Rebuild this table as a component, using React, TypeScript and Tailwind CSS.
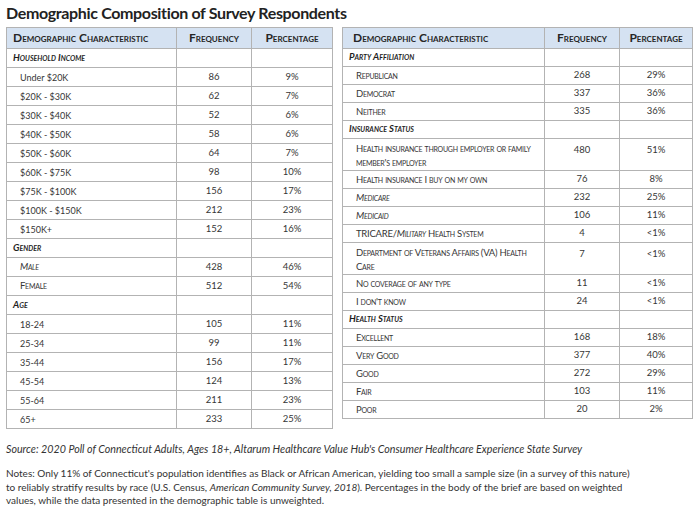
import React from "react";

type Row =
  | { kind: "cat"; label: React.ReactNode }
  | { kind: "item"; label: React.ReactNode; freq: string; pct: string; sc?: boolean; tall?: boolean };

const leftRows: Row[] = [
  { kind: "cat", label: "Household Income" },
  { kind: "item", label: "Under $20K", freq: "86", pct: "9%" },
  { kind: "item", label: "$20K - $30K", freq: "62", pct: "7%" },
  { kind: "item", label: "$30K - $40K", freq: "52", pct: "6%" },
  { kind: "item", label: "$40K - $50K", freq: "58", pct: "6%" },
  { kind: "item", label: "$50K - $60K", freq: "64", pct: "7%" },
  { kind: "item", label: "$60K - $75K", freq: "98", pct: "10%" },
  { kind: "item", label: "$75K - $100K", freq: "156", pct: "17%" },
  { kind: "item", label: "$100K - $150K", freq: "212", pct: "23%" },
  { kind: "item", label: "$150K+", freq: "152", pct: "16%" },
  { kind: "cat", label: "Gender" },
  { kind: "item", label: <i>Male</i>, freq: "428", pct: "46%", sc: true },
  { kind: "item", label: "Female", freq: "512", pct: "54%", sc: true },
  { kind: "cat", label: "Age" },
  { kind: "item", label: "18-24", freq: "105", pct: "11%" },
  { kind: "item", label: "25-34", freq: "99", pct: "11%" },
  { kind: "item", label: "35-44", freq: "156", pct: "17%" },
  { kind: "item", label: "45-54", freq: "124", pct: "13%" },
  { kind: "item", label: "55-64", freq: "211", pct: "23%" },
  { kind: "item", label: "65+", freq: "233", pct: "25%" },
];

const rightRows: Row[] = [
  { kind: "cat", label: "Party Affiliation" },
  { kind: "item", label: "Republican", freq: "268", pct: "29%", sc: true },
  { kind: "item", label: "Democrat", freq: "337", pct: "36%", sc: true },
  { kind: "item", label: "Neither", freq: "335", pct: "36%", sc: true },
  { kind: "cat", label: "Insurance Status" },
  {
    kind: "item",
    label: "Health insurance through employer or family member's employer",
    freq: "480",
    pct: "51%",
    sc: true,
    tall: true,
  },
  { kind: "item", label: "Health insurance I buy on my own", freq: "76", pct: "8%", sc: true },
  { kind: "item", label: <i>Medicare</i>, freq: "232", pct: "25%", sc: true },
  { kind: "item", label: <i>Medicaid</i>, freq: "106", pct: "11%", sc: true },
  {
    kind: "item",
    label: (
      <>
        TRICARE/<i>Military</i> Health System
      </>
    ),
    freq: "4",
    pct: "<1%",
    sc: true,
  },
  {
    kind: "item",
    label: "Department of Veterans Affairs (VA) Health Care",
    freq: "7",
    pct: "<1%",
    sc: true,
    tall: true,
  },
  { kind: "item", label: "No coverage of any type", freq: "11", pct: "<1%", sc: true },
  { kind: "item", label: "I don't know", freq: "24", pct: "<1%", sc: true },
  { kind: "cat", label: "Health Status" },
  { kind: "item", label: "Excellent", freq: "168", pct: "18%", sc: true },
  { kind: "item", label: "Very Good", freq: "377", pct: "40%", sc: true },
  { kind: "item", label: "Good", freq: "272", pct: "29%", sc: true },
  { kind: "item", label: "Fair", freq: "103", pct: "11%", sc: true },
  { kind: "item", label: "Poor", freq: "20", pct: "2%", sc: true },
];

const cell = "border border-[#b3b3b3] p-0";

function DataTable({
  rows,
  widths,
  rowH,
  tallH,
  headPad,
}: {
  rows: Row[];
  widths: [string, string, string];
  rowH: string;
  tallH: string;
  headPad: string;
}) {
  return (
    <table className="table-fixed border-collapse border border-[#8f8f8f] text-[#363636]">
      <colgroup>
        <col className={widths[0]} />
        <col className={widths[1]} />
        <col className={widths[2]} />
      </colgroup>
      <thead>
        <tr className="h-[21px] bg-[#d5e2f2] text-[12px] text-[#262626] [font-variant:small-caps]">
          <th className={`${cell} ${headPad} text-left font-bold`}>Demographic Characteristic</th>
          <th className={`${cell} text-center font-bold`}>Frequency</th>
          <th className={`${cell} text-center font-bold`}>Percentage</th>
        </tr>
      </thead>
      <tbody>
        {rows.map((r, i) =>
          r.kind === "cat" ? (
            <tr key={i} className={rowH}>
              <td className={`${cell} pl-[6px] text-[9.5px] font-bold italic text-[#1e1e1e] [font-variant:small-caps]`}>
                {r.label}
              </td>
              <td className={cell}></td>
              <td className={cell}></td>
            </tr>
          ) : (
            <tr key={i} className={r.tall ? tallH : rowH}>
              <td
                className={`${cell} pl-[13px] pr-[4px] ${r.tall ? "align-top pt-[3px] leading-[14px]" : "leading-none"} ${
                  r.sc ? "text-[9.5px] tracking-[-0.25px] [font-variant:small-caps]" : "text-[9px]"
                }`}
              >
                {r.label}
              </td>
              <td className={`${cell} text-center text-[9.5px] ${r.tall ? "align-top pt-[4px]" : ""}`}>{r.freq}</td>
              <td className={`${cell} text-center text-[9.5px] ${r.tall ? "align-top pt-[4px]" : ""}`}>{r.pct}</td>
            </tr>
          )
        )}
      </tbody>
    </table>
  );
}

export default function App() {
  return (
    <div className="w-[700px] h-[509px] bg-white px-[6px] font-['Lato',sans-serif] text-[#333]">
      <h1 className="h-[27px] pt-[2px] text-[16px] font-bold leading-[22px] tracking-[-0.35px] text-[#222]">
        Demographic Composition of Survey Respondents
      </h1>
      <div className="flex items-start gap-[9px]">
        <DataTable
          rows={leftRows}
          widths={["w-[170px]", "w-[75px]", "w-[81px]"]}
          rowH="h-[19px]"
          tallH="h-[32px]"
          headPad="pl-[6px]"
        />
        <DataTable
          rows={rightRows}
          widths={["w-[202px]", "w-[75px]", "w-[73px]"]}
          rowH="h-[18px]"
          tallH="h-[32px]"
          headPad="pl-[10px]"
        />
      </div>
      <p className="mt-[13px] text-[10.7px] italic leading-[14px] text-[#333]">
        Source: 2020 Poll of Connecticut Adults, Ages 18+, Altarum Healthcare Value Hub's Consumer Healthcare
        Experience State Survey
      </p>
      <p className="mt-[11px] text-[10px] leading-[13.5px] text-[#333]">
        Notes: Only 11% of Connecticut's population identifies as Black or African American, yielding too small a
        sample size (in a survey of this nature)
        <br />
        to reliably stratify results by race (U.S. Census, <i>American Community Survey, 2018</i>). Percentages in
        the body of the brief are based on weighted
        <br />
        values, while the data presented in the demographic table is unweighted.
      </p>
    </div>
  );
}
